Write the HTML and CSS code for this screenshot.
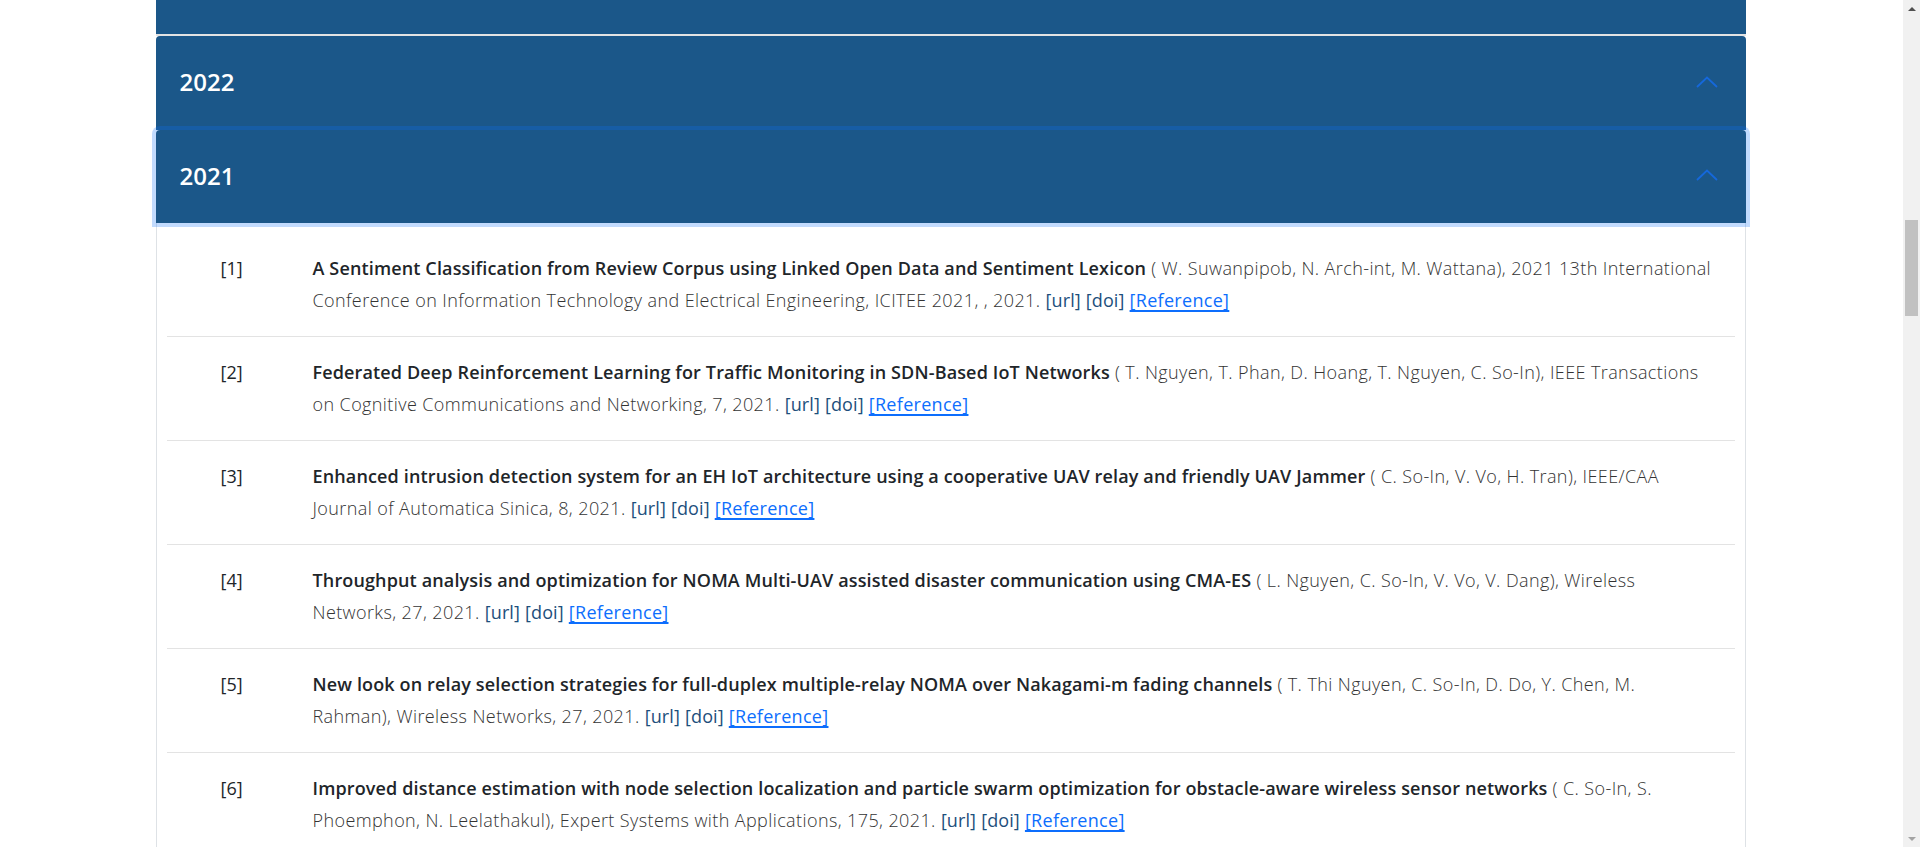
FILE: index.html
```html
<!DOCTYPE html>
<html lang="en">
<head>
<meta charset="utf-8">
<title>Publications</title>
<link rel="stylesheet" href="styles.css">
</head>
<body>
<div class="viewport">
  <div class="container">
    <div class="accordion">
      <div class="acc-item acc-prev">
        <div class="acc-tail"></div>
      </div>
      <div class="acc-item">
        <button class="acc-btn" type="button"><span class="acc-year">2022</span><svg class="chev" viewBox="0 0 22 12" width="22" height="12"><polyline points="1,11 11,1.5 21,11"/></svg></button>
      </div>
      <div class="acc-item acc-open">
        <button class="acc-btn acc-focus" type="button"><span class="acc-year">2021</span><svg class="chev" viewBox="0 0 22 12" width="22" height="12"><polyline points="1,11 11,1.5 21,11"/></svg></button>
        <div class="acc-body">
          <div class="pub">
            <div class="pub-no">[1]</div>
            <div class="pub-text"><b class="pub-title">A Sentiment Classification from Review Corpus using Linked Open Data and Sentiment Lexicon</b> ( W. Suwanpipob, N. Arch-int, M. Wattana), 2021 13th International Conference on Information Technology and Electrical Engineering, ICITEE 2021, , 2021. <a class="lnk" href="#">[url]</a> <a class="lnk" href="#">[doi]</a> <a class="ref" href="#">[Reference]</a></div>
          </div>
          <div class="pub">
            <div class="pub-no">[2]</div>
            <div class="pub-text"><b class="pub-title">Federated Deep Reinforcement Learning for Traffic Monitoring in SDN-Based IoT Networks</b> ( T. Nguyen, T. Phan, D. Hoang, T. Nguyen, C. So-In), IEEE Transactions on Cognitive Communications and Networking, 7, 2021. <a class="lnk" href="#">[url]</a> <a class="lnk" href="#">[doi]</a> <a class="ref" href="#">[Reference]</a></div>
          </div>
          <div class="pub">
            <div class="pub-no">[3]</div>
            <div class="pub-text"><b class="pub-title">Enhanced intrusion detection system for an EH IoT architecture using a cooperative UAV relay and friendly UAV Jammer</b> ( C. So-In, V. Vo, H. Tran), IEEE/CAA Journal of Automatica Sinica, 8, 2021. <a class="lnk" href="#">[url]</a> <a class="lnk" href="#">[doi]</a> <a class="ref" href="#">[Reference]</a></div>
          </div>
          <div class="pub">
            <div class="pub-no">[4]</div>
            <div class="pub-text"><b class="pub-title">Throughput analysis and optimization for NOMA Multi-UAV assisted disaster communication using CMA-ES</b> ( L. Nguyen, C. So-In, V. Vo, V. Dang), Wireless Networks, 27, 2021. <a class="lnk" href="#">[url]</a> <a class="lnk" href="#">[doi]</a> <a class="ref" href="#">[Reference]</a></div>
          </div>
          <div class="pub">
            <div class="pub-no">[5]</div>
            <div class="pub-text"><b class="pub-title">New look on relay selection strategies for full-duplex multiple-relay NOMA over Nakagami-m fading channels</b> ( T. Thi Nguyen, C. So-In, D. Do, Y. Chen, M. Rahman), Wireless Networks, 27, 2021. <a class="lnk" href="#">[url]</a> <a class="lnk" href="#">[doi]</a> <a class="ref" href="#">[Reference]</a></div>
          </div>
          <div class="pub">
            <div class="pub-no">[6]</div>
            <div class="pub-text"><b class="pub-title">Improved distance estimation with node selection localization and particle swarm optimization for obstacle-aware wireless sensor networks</b> ( C. So-In, S. Phoemphon, N. Leelathakul), Expert Systems with Applications, 175, 2021. <a class="lnk" href="#">[url]</a> <a class="lnk" href="#">[doi]</a> <a class="ref" href="#">[Reference]</a></div>
          </div>
        </div>
      </div>
    </div>
  </div>
</div>
<div class="scrollbar" aria-hidden="true">
  <div class="sb-arrow sb-up"></div>
  <div class="sb-track"><div class="sb-thumb"></div></div>
  <div class="sb-arrow sb-down"></div>
</div>
</body>
</html>
```

FILE: styles.css
```css
html, body {
  margin: 0;
  padding: 0;
  background: #ffffff;
  overflow: hidden;
}

body {
  font-family: "Open Sans", "Noto Sans", sans-serif;
  color: #212529;
}

.viewport {
  width: 1901px;
  height: 847px;
  overflow: hidden;
}

.container {
  width: 1590px;
  margin: 0 auto;
}

.accordion {
  display: flex;
  flex-direction: column;
}

.acc-item {
  background: #ffffff;
}

.acc-prev {
  border-bottom: 2px solid #e3e3e3;
}

.acc-tail {
  height: 34px;
  background: #1b5789;
}

.acc-btn {
  width: 100%;
  height: 94px;
  margin: 0;
  padding: 0 24px 3px 24px;
  border: 0;
  border-radius: 4px 4px 0 0;
  background: #1b5789;
  color: #ffffff;
  display: flex;
  align-items: center;
  justify-content: space-between;
  font-family: "Open Sans", "Noto Sans", sans-serif;
  font-size: 24px;
  font-weight: 600;
  text-align: left;
  cursor: pointer;
}

.acc-focus {
  height: 93px;
  position: relative;
  z-index: 3;
  box-shadow: 0 0 0 4px rgba(13, 110, 253, 0.25);
}

.chev {
  display: block;
  margin-right: 4px;
  fill: none;
  stroke: #1568dc;
  stroke-width: 1.8;
}

.acc-body {
  border-left: 1px solid #dee2e6;
  border-right: 1px solid #dee2e6;
  padding: 10px 10px 0;
}

.pub {
  display: grid;
  grid-template-columns: 146px 1fr;
  padding: 20px 0;
  border-bottom: 1px solid #e3e3e3;
  font-size: 18px;
  line-height: 31.5px;
}

.pub-no {
  padding-left: 54px;
  font-weight: 400;
  color: #212529;
}

.pub-text {
  padding-right: 20px;
  font-weight: 300;
  letter-spacing: 0.4px;
  color: #333333;
}

.pub-title {
  font-weight: 600;
  letter-spacing: 0.14px;
  color: #212529;
}

.lnk {
  color: #1d4f7c;
  text-decoration: none;
  font-weight: 400;
  letter-spacing: 0.1px;
}

.ref {
  color: #0d6efd;
  text-decoration: underline;
  text-underline-offset: 3px;
  text-decoration-thickness: 1.5px;
  font-weight: 400;
  letter-spacing: 0.3px;
}

.scrollbar {
  position: fixed;
  top: 0;
  right: 0;
  width: 17px;
  height: 847px;
  background: #f1f1f1;
  display: flex;
  flex-direction: column;
}

.sb-arrow {
  height: 17px;
  display: flex;
  align-items: center;
  justify-content: center;
}

.sb-up::before,
.sb-down::before {
  content: "";
  width: 0;
  height: 0;
  border-left: 4px solid transparent;
  border-right: 4px solid transparent;
}

.sb-up::before {
  border-bottom: 4px solid #505050;
}

.sb-down::before {
  border-top: 4px solid #a3a3a3;
}

.sb-track {
  flex: 1;
  padding: 203px 2px 0;
}

.sb-thumb {
  height: 96px;
  background: #c1c1c1;
}
```
